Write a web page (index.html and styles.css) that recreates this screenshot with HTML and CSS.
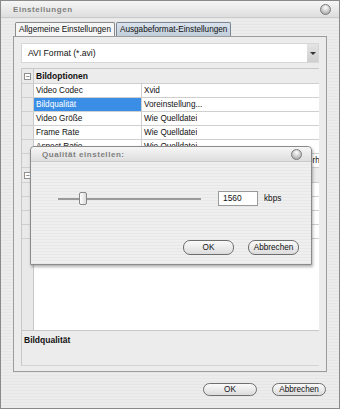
FILE: index.html
```html
<!DOCTYPE html>
<html lang="de">
<head>
    <meta charset="UTF-8">
    <title>Einstellungen</title>
    <link rel="stylesheet" href="styles.css">
</head>
<body>

<div class="window">
    <div class="titlebar">
        <span class="title">Einstellungen</span>
        <span class="close-btn"></span>
    </div>

    <div class="tabs">
        <div class="tab">Allgemeine Einstellungen</div>
        <div class="tab active">Ausgabeformat-Einstellungen</div>
    </div>

    <div class="panel">
        <div class="select">
            <span>AVI Format (*.avi)</span>
            <span class="select-arrow"></span>
        </div>

        <div class="grid">
            <div class="category">
                <span class="gutter"><span class="toggle">&minus;</span></span>
                <span class="cat-name">Bildoptionen</span>
            </div>
            <div class="row">
                <span class="gutter"></span>
                <span class="name">Video Codec</span>
                <span class="value">Xvid</span>
            </div>
            <div class="row selected">
                <span class="gutter"></span>
                <span class="name">Bildqualität</span>
                <span class="value">Voreinstellung...</span>
            </div>
            <div class="row">
                <span class="gutter"></span>
                <span class="name">Video Größe</span>
                <span class="value">Wie Quelldatei</span>
            </div>
            <div class="row">
                <span class="gutter"></span>
                <span class="name">Frame Rate</span>
                <span class="value">Wie Quelldatei</span>
            </div>
            <div class="row">
                <span class="gutter"></span>
                <span class="name">Aspect Ratio</span>
                <span class="value">Wie Quelldatei</span>
            </div>
            <div class="row">
                <span class="gutter"></span>
                <span class="name">Zoom</span>
                <span class="value">Letterbox beibehalten, Ränder füllen, Seitenverhältnis</span>
            </div>
            <div class="category">
                <span class="gutter"><span class="toggle">&minus;</span></span>
                <span class="cat-name">Audiooptionen</span>
            </div>
            <div class="row">
                <span class="gutter"></span>
                <span class="name">Audio Codec</span>
                <span class="value">MP3</span>
            </div>
            <div class="row">
                <span class="gutter"></span>
                <span class="name">Bitrate</span>
                <span class="value">128 kbps</span>
            </div>
            <div class="row">
                <span class="gutter"></span>
                <span class="name">Kanäle</span>
                <span class="value">Stereo</span>
            </div>
            <div class="row">
                <span class="gutter"></span>
                <span class="name">Abtastrate</span>
                <span class="value">44100 Hz</span>
            </div>
            <div class="grid-empty">
                <span class="gutter"></span>
            </div>
        </div>

        <div class="desc">
            <div class="desc-title">Bildqualität</div>
        </div>
    </div>

    <div class="buttons">
        <button class="pill">OK</button>
        <button class="pill">Abbrechen</button>
    </div>

    <div class="dialog">
        <div class="titlebar dialog-bar">
            <span class="title">Qualität einstellen:</span>
            <span class="close-btn"></span>
        </div>
        <div class="dialog-body">
            <div class="slider-line">
                <div class="slider">
                    <span class="thumb"></span>
                </div>
                <div class="kbps-input">1560</div>
                <span class="unit">kbps</span>
            </div>
            <div class="dialog-buttons">
                <button class="pill">OK</button>
                <button class="pill">Abbrechen</button>
            </div>
        </div>
    </div>
</div>

</body>
</html>
```

FILE: styles.css
```css
* {
    box-sizing: border-box;
}
body {
    margin: 0;
    font-family: "Liberation Sans", Arial, sans-serif;
    font-size: 8.2px;
    color: #111;
}
.window {
    position: relative;
    width: 340px;
    height: 409px;
    border: 1px solid #8a8a8a;
    background: repeating-linear-gradient(#ececec 0, #ececec 2px, #e6e6e6 2px, #e6e6e6 3px);
    overflow: hidden;
}
.titlebar {
    height: 17px;
    display: flex;
    align-items: center;
    justify-content: space-between;
    padding: 0 8px 0 12px;
    background: linear-gradient(#f6f6f6, #dedede);
    border-bottom: 1px solid #cacaca;
}
.title {
    font-weight: bold;
    font-size: 8px;
    letter-spacing: 0.55px;
    color: #808080;
}
.close-btn {
    width: 11px;
    height: 11px;
    border-radius: 50%;
    border: 1px solid #7a7a7a;
    background: radial-gradient(circle at 50% 30%, #ffffff 0, #d0d0d0 45%, #9a9a9a 100%);
}
.tabs {
    display: flex;
    margin: 4px 0 0 14px;
    height: 14px;
}
.tab {
    padding: 0 3px;
    line-height: 13px;
    border: 1px solid #8c8c8c;
    border-bottom: none;
    background: #f6f6f6;
    border-radius: 2px 2px 0 0;
    margin-right: 1px;
}
.tab.active {
    background: linear-gradient(#d9e2ec, #c2cedb);
    border-color: #7d8793;
}
.panel {
    margin: 0 12px;
    height: 336px;
    border: 1px solid #9c9c9c;
    background: #ececec;
    display: flex;
    flex-direction: column;
    padding: 6px 7px 5px;
}
.select {
    height: 20px;
    flex: none;
    background: #fff;
    border: 1px solid #d6d6d6;
    display: flex;
    align-items: center;
    justify-content: space-between;
    padding-left: 6px;
    font-size: 8.6px;
}
.select-arrow {
    width: 11px;
    height: 18px;
    background: linear-gradient(#e4e4e4, #cfcfcf);
    position: relative;
}
.select-arrow::after {
    content: "";
    position: absolute;
    left: 3px;
    top: 8px;
    border-left: 3px solid transparent;
    border-right: 3px solid transparent;
    border-top: 3px solid #333;
}
.grid {
    margin-top: 5px;
    flex: 1;
    border: 1px solid #c8c8c8;
    border-right: none;
    background: #fff;
    display: flex;
    flex-direction: column;
    overflow: hidden;
}
.row, .category {
    display: flex;
    height: 14px;
    flex: none;
    border-bottom: 1px solid #cfcfcf;
    white-space: nowrap;
}
.category {
    height: 15px;
    background: #ececec;
}
.gutter {
    width: 12px;
    flex: none;
    background: #e9e9e9;
    border-right: 1px solid #c8c8c8;
    display: flex;
    align-items: center;
    justify-content: center;
}
.toggle {
    width: 7px;
    height: 7px;
    border: 1px solid #909090;
    background: #fff;
    font-size: 7px;
    line-height: 5px;
    text-align: center;
    color: #333;
}
.cat-name {
    font-weight: bold;
    font-size: 8.5px;
    line-height: 14px;
    padding-left: 2px;
}
.name {
    width: 108px;
    flex: none;
    padding-left: 2px;
    line-height: 13px;
    border-right: 1px solid #cfcfcf;
}
.value {
    padding-left: 2px;
    line-height: 13px;
    overflow: hidden;
}
.selected .name {
    background: #3b8ee6;
    color: #fff;
}
.grid-empty {
    flex: 1;
    display: flex;
}
.desc {
    height: 35px;
    flex: none;
    border-left: 1px solid #c8c8c8;
    border-bottom: 1px solid #d4d4d4;
    padding: 4px 0 0 2px;
}
.desc-title {
    font-weight: bold;
    font-size: 8.5px;
}
.buttons {
    display: flex;
    justify-content: flex-end;
    gap: 15px;
    padding: 11px 13px 0 0;
}
.pill {
    width: 54px;
    height: 13px;
    padding: 0;
    border: 1px solid #6e6e6e;
    border-radius: 7px;
    background: linear-gradient(#fafafa, #dcdcdc);
    font-family: inherit;
    font-size: 8.2px;
    color: #111;
    line-height: 11px;
}
.dialog {
    position: absolute;
    left: 29px;
    top: 145px;
    width: 282px;
    height: 119px;
    border: 1px solid #8a8a8a;
    border-radius: 4px 4px 0 0;
    background: repeating-linear-gradient(#efefef 0, #efefef 2px, #e7e7e7 2px, #e7e7e7 3px);
    box-shadow: 1px 2px 3px rgba(0, 0, 0, 0.3);
    display: grid;
    grid-template-rows: 15px 1fr;
}
.dialog-bar {
    height: 15px;
    padding: 0 9px 0 11px;
    border-radius: 4px 4px 0 0;
}
.dialog-body {
    display: grid;
    grid-template-rows: 15px 1fr 15px;
    padding: 29px 12px 9px 27px;
}
.slider-line {
    display: flex;
    align-items: center;
}
.slider {
    position: relative;
    width: 143px;
    height: 2px;
    background: #9a9a9a;
    margin-right: 17px;
}
.thumb {
    position: absolute;
    left: 21px;
    top: -6px;
    width: 8px;
    height: 13px;
    border: 1px solid #888;
    border-radius: 2px;
    background: linear-gradient(90deg, #fff, #dcdcdc);
}
.kbps-input {
    width: 40px;
    height: 15px;
    border: 1px solid #9a9a9a;
    background: #fff;
    padding-left: 4px;
    line-height: 13px;
    font-size: 8.4px;
}
.unit {
    margin-left: 6px;
}
.dialog-buttons {
    grid-row: 3;
    display: flex;
    justify-content: flex-end;
    gap: 14px;
}
.dialog-buttons .pill {
    width: 51px;
    height: 15px;
    line-height: 13px;
}
```
